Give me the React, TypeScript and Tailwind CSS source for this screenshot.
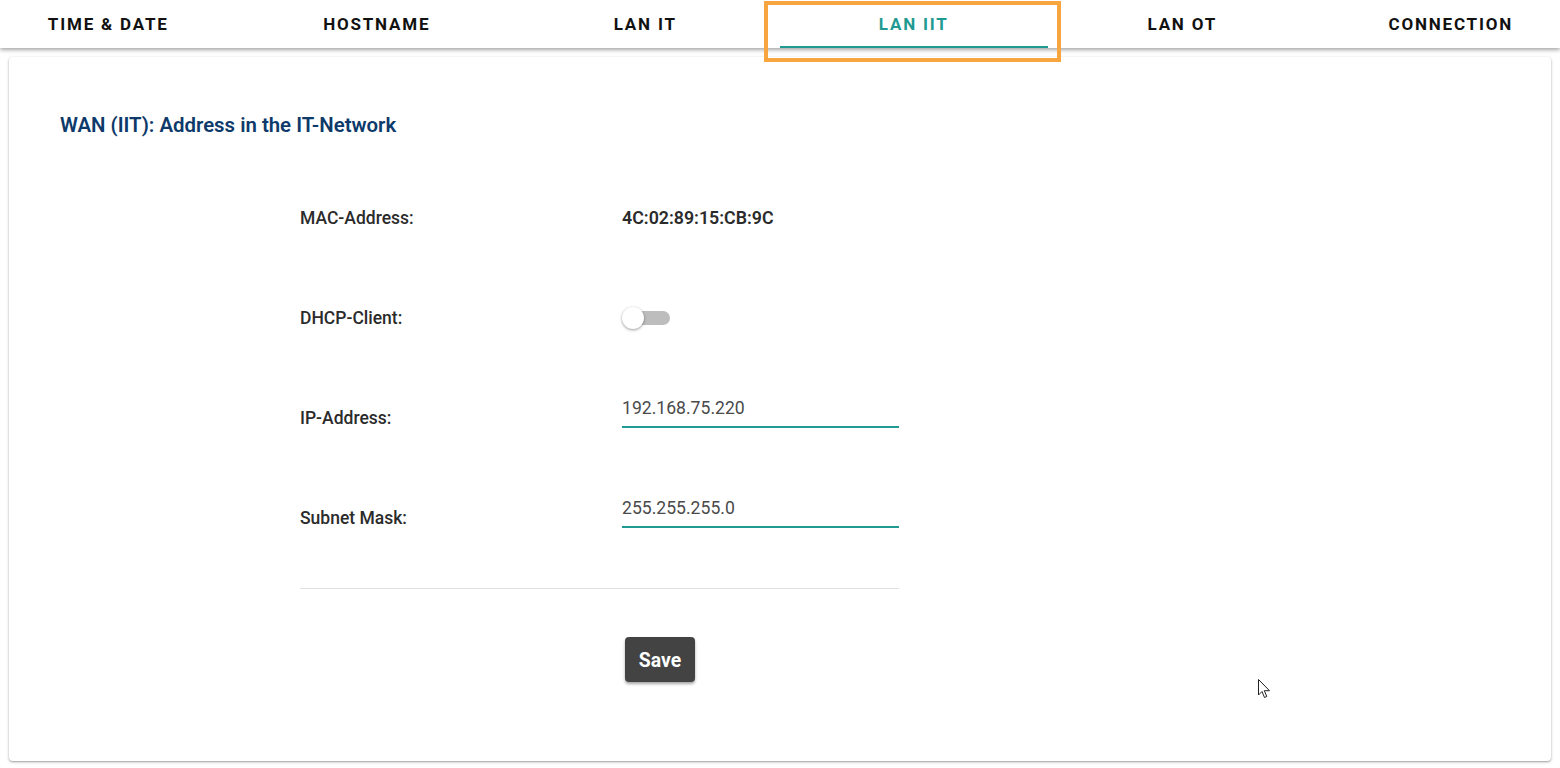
import React from "react";

const tabs = ["TIME & DATE", "HOSTNAME", "LAN IT", "LAN IIT", "LAN OT", "CONNECTION"];

function Row({ label, children }: { label: string; children: React.ReactNode }) {
  return (
    <div className="flex h-[100px] items-center">
      <div className="w-[322px] text-[17.5px] font-medium text-[#2b2b2b]">{label}</div>
      <div className="w-[277px]">{children}</div>
    </div>
  );
}

function Field({ value }: { value: string }) {
  return (
    <div className="mb-[18px] flex h-[38px] items-center border-b-2 border-[#1f9a93]">
      <span className="text-[17.6px] text-[#4a4a4a]">{value}</span>
    </div>
  );
}

export default function App() {
  return (
    <div
      className="relative min-h-[768px] w-[1560px] overflow-hidden bg-white"
      style={{ fontFamily: "Roboto, 'Liberation Sans', sans-serif" }}
    >
      {/* Tab bar */}
      <div className="relative z-10 h-[48px] bg-white shadow-[0_2px_4px_rgba(0,0,0,0.35)]">
        <div className="ml-[-26px] flex h-full">
          {tabs.map((t) => {
            const active = t === "LAN IIT";
            return (
              <div key={t} className="relative flex h-full w-[268.5px] shrink-0 items-center justify-center pt-[2px]">
                <span
                  className={
                    "text-[17px] font-bold tracking-[1.8px] " +
                    (active ? "text-[#1f9a93]" : "text-[#111]")
                  }
                >
                  {t}
                </span>
                {active && <div className="absolute bottom-0 left-[0px] right-[0px] h-[2px] bg-[#1f9a93]" />}
              </div>
            );
          })}
        </div>
      </div>

      {/* Highlight annotation */}
      <div className="pointer-events-none absolute left-[764px] top-[1px] z-20 h-[61px] w-[297px] border-[4px] border-[#f9a53f]" />

      {/* Card */}
      <div className="mx-[9px] mt-[9px] h-[704px] rounded-[4px] bg-white shadow-[0_1px_3px_rgba(0,0,0,0.3),0_1px_1px_rgba(0,0,0,0.12)]">
        <div className="pl-[51px] pt-[56px]">
          <h2 className="h-[24px] text-[20.4px] font-semibold leading-[24px] text-[#0d3a6a]">
            WAN (IIT): Address in the IT-Network
          </h2>
        </div>
        <div className="ml-[291px] mt-[31px] w-[599px]">
          <Row label="MAC-Address:">
            <span className="text-[17.8px] font-semibold text-[#2b2b2b]">4C:02:89:15:CB:9C</span>
          </Row>
          <Row label="DHCP-Client:">
            <div className="relative h-[22px] w-[48px]">
              <div className="absolute left-[14px] top-[4px] h-[14px] w-[34px] rounded-full bg-[#bdbdbd]" />
              <div className="absolute left-0 top-0 h-[22px] w-[22px] rounded-full bg-white shadow-[0_1px_3px_rgba(0,0,0,0.4)]" />
            </div>
          </Row>
          <Row label="IP-Address:">
            <Field value="192.168.75.220" />
          </Row>
          <Row label="Subnet Mask:">
            <Field value="255.255.255.0" />
          </Row>
          <div className="mt-[20px] h-px bg-[#e0e0e0]" />
          <div className="mt-[48px] pl-[325px]">
            <button className="flex h-[45px] w-[70px] items-center justify-center rounded-[4px] bg-[#434343] pt-[2px] text-[19.4px] font-bold text-white shadow-[0_2px_3px_rgba(0,0,0,0.35)]">
              Save
            </button>
          </div>
        </div>
      </div>

      {/* Mouse cursor */}
      <svg className="absolute left-[1258px] top-[679px] z-30" width="13" height="20" viewBox="0 0 13 20">
        <path d="M0.5 0.5 L0.5 16 L4 12.5 L6.5 18.5 L8.8 17.5 L6.3 11.7 L11.5 11.7 Z" fill="white" stroke="#222" strokeWidth="1" strokeLinejoin="round" />
      </svg>
    </div>
  );
}
